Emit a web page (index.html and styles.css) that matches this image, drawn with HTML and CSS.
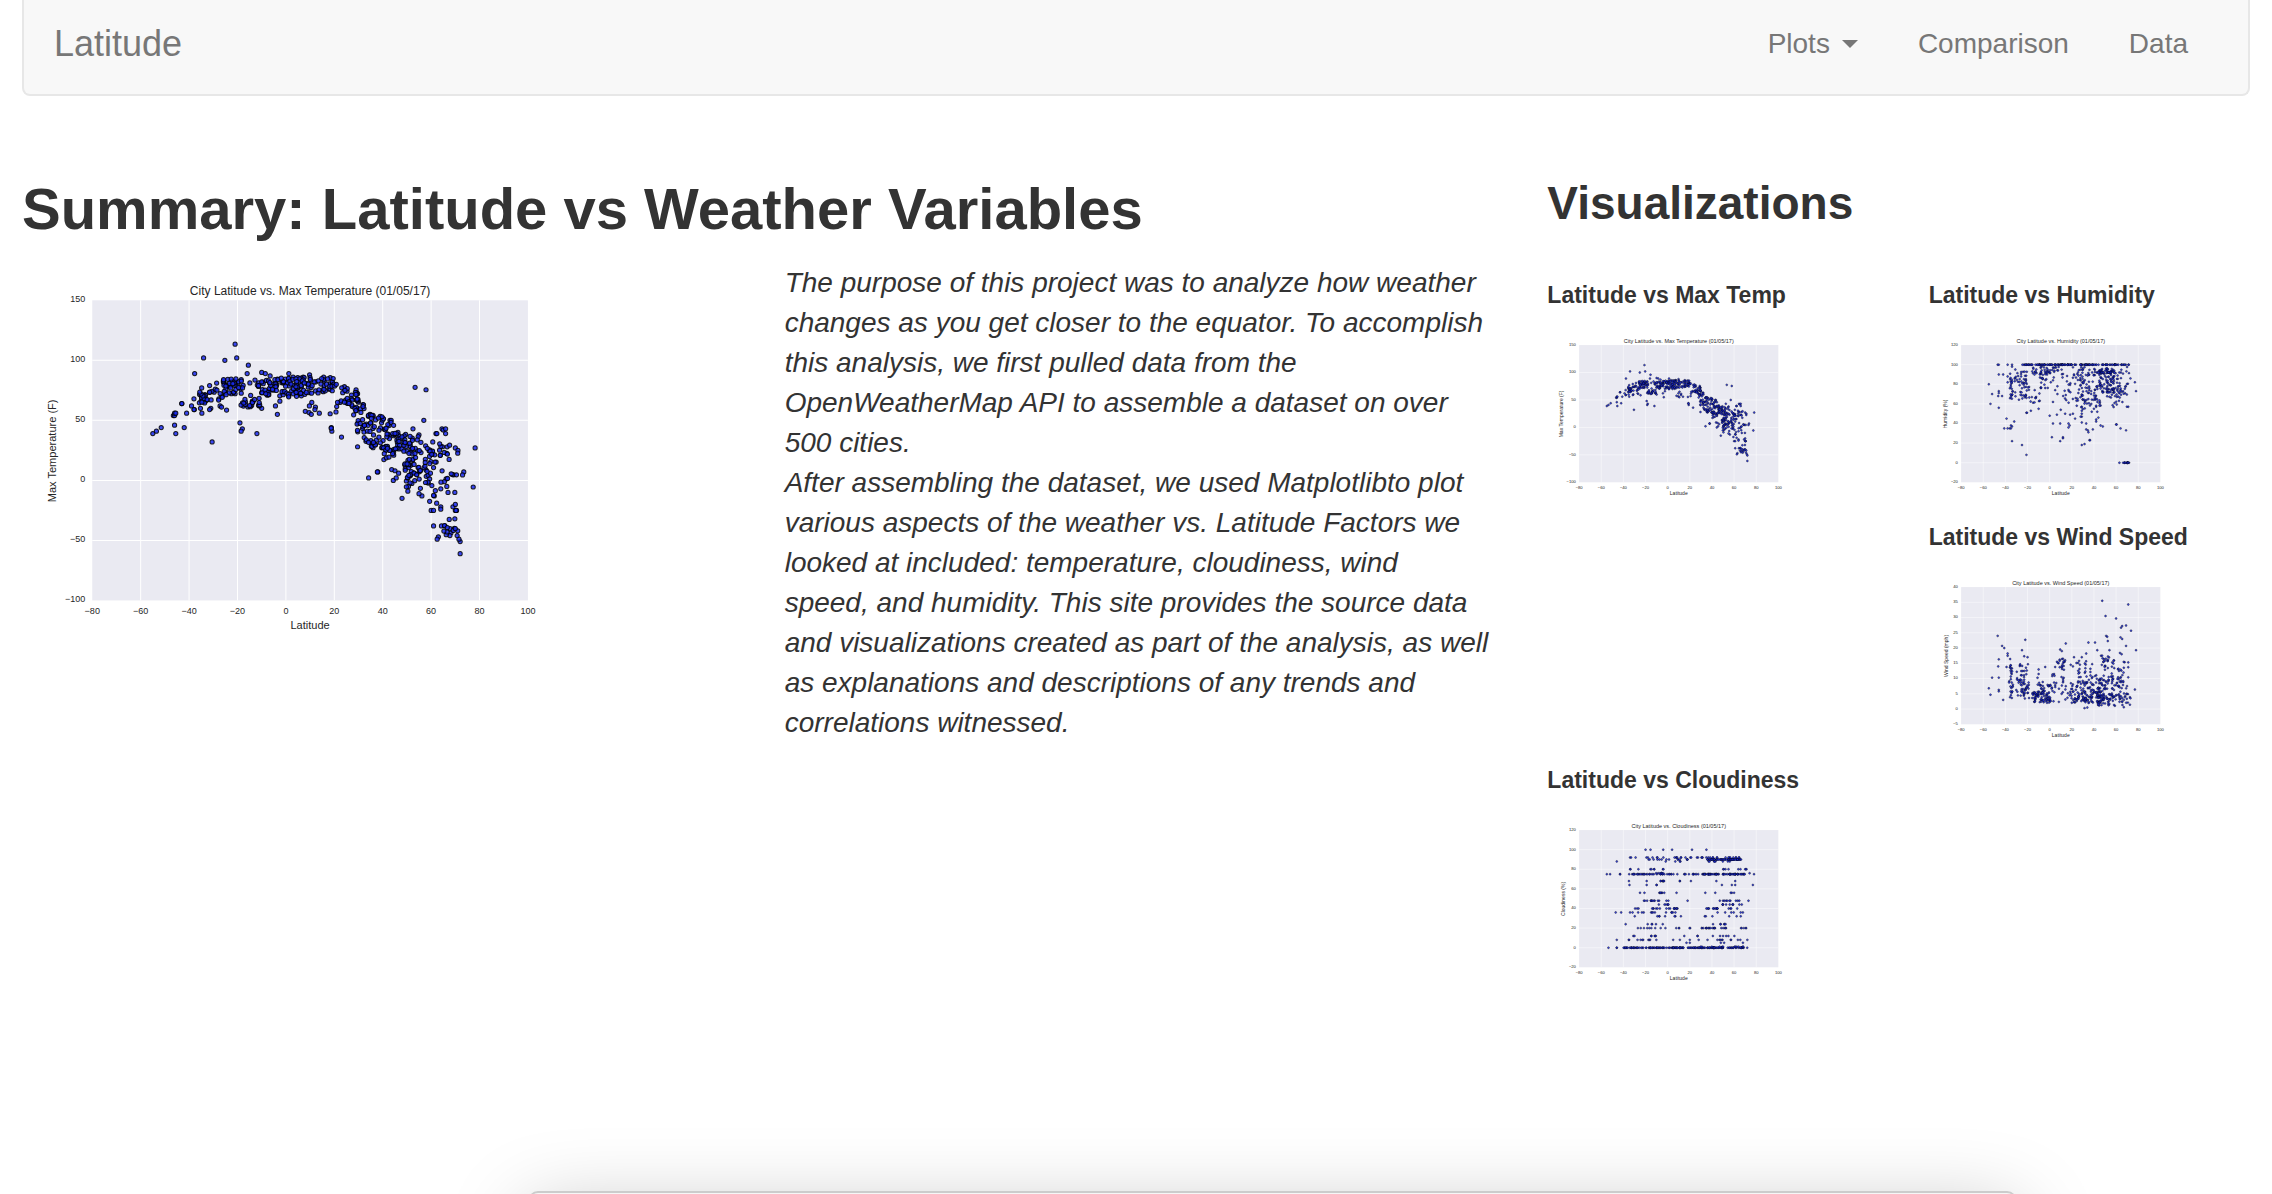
FILE: index.html
```html
<!DOCTYPE html>
<html lang="en">
<head>
<meta charset="utf-8">
<meta name="viewport" content="width=device-width, initial-scale=1">
<title>Latitude</title>
<link rel="stylesheet" href="styles.css">
</head>
<body>
<nav class="navbar">
  <a class="brand" href="#">Latitude</a>
  <ul class="nav-list">
    <li><button class="nav-item" type="button" aria-haspopup="true">Plots <span class="caret"></span></button></li>
    <li><a class="nav-item" href="#comparison">Comparison</a></li>
    <li><a class="nav-item" href="#data">Data</a></li>
  </ul>
</nav>
<main class="page">
  <section class="summary">
    <h1 class="summary-title">Summary: Latitude vs Weather Variables</h1>
    <div class="summary-body">
      <div><svg class="chart" data-chart="temp"></svg></div>
      <p class="summary-text">The purpose of this project was to analyze how weather changes as you get closer to the equator. To accomplish this analysis, we first pulled data from the OpenWeatherMap API to assemble a dataset on over 500 cities.<br>After assembling the dataset, we used Matplotlibto plot various aspects of the weather vs. Latitude Factors we looked at included: temperature, cloudiness, wind speed, and humidity. This site provides the source data and visualizations created as part of the analysis, as well as explanations and descriptions of any trends and correlations witnessed.</p>
    </div>
  </section>
  <section class="visuals">
    <h2 class="visuals-title">Visualizations</h2>
    <div class="thumbs">
      <article class="thumb"><h3 class="thumb-title">Latitude vs Max Temp</h3><a href="#temp"><svg class="chart" data-chart="temp"></svg></a></article>
      <article class="thumb"><h3 class="thumb-title">Latitude vs Humidity</h3><a href="#humidity"><svg class="chart" data-chart="humidity"></svg></a></article>
      <article class="thumb thumb-right"><h3 class="thumb-title">Latitude vs Wind Speed</h3><a href="#wind"><svg class="chart" data-chart="wind"></svg></a></article>
      <article class="thumb"><h3 class="thumb-title">Latitude vs Cloudiness</h3><a href="#clouds"><svg class="chart" data-chart="clouds"></svg></a></article>
    </div>
  </section>
</main>
<div class="sheet"></div>
<script src="charts.js"></script>
</body>
</html>
```
FILE: styles.css
```css
* { box-sizing: border-box; }

body {
  margin: 0;
  padding: 0 22px;
  min-height: 100vh;
  background: #fff;
  color: #333;
  font: 28px/40px "Liberation Sans", Arial, sans-serif;
}

h1, h2, h3, p, ul { margin: 0; padding: 0; }

.navbar {
  display: flex;
  justify-content: space-between;
  padding: 24px 30px 30px;
  background: #f8f8f8;
  border: solid #e7e7e7;
  border-width: 0 2px 2px;
  border-radius: 0 0 8px 8px;
}
.brand { color: #777; font-size: 36px; text-decoration: none; }
.nav-list { display: flex; list-style: none; }
.nav-item {
  display: flex;
  align-items: center;
  gap: 12px;
  padding: 0 30px;
  border: 0;
  background: none;
  color: #777;
  font: inherit;
  text-decoration: none;
}
.caret {
  border: 8px solid transparent;
  border-top-color: #777;
  border-bottom: 0;
}

.page {
  display: grid;
  grid-template-columns: repeat(3, minmax(0, 1fr));
  gap: 60px;
  padding-top: 81px;
}
.summary { grid-column: span 2; }
.summary-title { font-size: 58px; line-height: 64px; margin-bottom: 22px; }
.summary-body { display: grid; grid-template-columns: 1fr 1fr; gap: 60px; }
.summary-text { font-style: italic; margin-right: -2px; }

.visuals-title { font-size: 46px; line-height: 52px; margin-bottom: 53px; }
.thumbs { display: grid; grid-template-columns: 1fr 1fr; gap: 25px 60px; }
.thumb-right { grid-column: 2; }
.thumb-title { font-size: 23px; line-height: 26px; margin-bottom: 20px; white-space: nowrap; }

.chart { display: block; width: 80%; aspect-ratio: 3 / 2; }
.plot-area { fill: #eaeaf2; }
.grid-line { stroke: #fff; stroke-width: 1; }
.dot { fill: #1a2af0; fill-opacity: .85; stroke: #000; stroke-width: 1; stroke-opacity: .85; }
.chart text { fill: #262626; }
.tick { font-size: 9px; }
.axis-name { font-size: 11px; }
.chart-title { font-size: 12px; }
.middle { text-anchor: middle; }
.end { text-anchor: end; }

/* Panel that peeks in from the bottom edge of the window */
.sheet {
  position: fixed;
  left: 23%;
  right: 11%;
  top: calc(100% - 3px);
  height: 400px;
  margin: 0 5px;
  background: #f6f6f6;
  border: 2px solid #ccc;
  border-radius: 10px;
  box-shadow: 0 20px 80px rgba(0, 0, 0, .25);
}
```
FILE: charts.js
```javascript
const LEFT = 70, RIGHT = 504, TOP = 37, BOTTOM = 336;

// bands: [count, latFrom, latTo, valueAtFrom, valueAtTo, spread]
// rows: [value, count, latFrom, latTo]
const charts = {
  temp: {
    title: "City Latitude vs. Max Temperature (01/05/17)", name: "Max Temperature (F)",
    min: -100, max: 150, step: 50, nameX: 34,
    points: [[-55,39],[-53.5,41],[-51.5,44],[-46,46],[-45.5,39],[-42,44],[-46.5,54],[-46,54],[-46,56],[-45.5,56],[-43,64],[-43,64],[-41,56],[-39,62],[-38,68],[-37.7,89],[-37.8,59],[-38,59],[-35.3,60],[-34.7,56],[-34,102],[-34.8,77],[-31.5,79],[-31,60],[-31.5,59],[-30.5,32],[-28.6,81],[-25.2,100],[-20.3,102],[-21,113.5],[-15.5,96],[-16,89],[-19,48],[-18,43],[-18.5,41],[-12,39],[-3.5,55],[-4.3,62],[-2.5,66],[-10,60],[-11,62],[-24.5,58.5],[-27.2,62],[-26.6,61],[-10,90],[-8.5,89],[-6.5,87],[1.2,89],[3,86],[53.4,77.5],[57.9,75.5],[57,50],[78.2,27],[77.4,-5.5],[73.5,7],[73,4.5],[72,-61],[72,-51],[71.5,-49],[71,-42],[63,-47],[62.5,-49],[34.2,2],[48,-15],[29.6,28],[23,36],[19,41],[18.8,44],[18.7,43.5],[8,57.5],[9.6,56.5],[10.5,55],[10.7,65],[9.7,62],[12.2,61],[12,59],[13.8,56],[18.3,55.5],[20.7,57],[21,61.5],[29,75.5],[9.8,88],[7.2,86],[15.6,86],[24.2,78],[38,7],[37.8,7],[43.7,9],[45.1,8],[46.6,6],[44.4,0],[45.6,2],[50.4,-9],[60,-25],[61,-25],[61,-38],[64.3,-38],[65.7,-38],[67.5,-32.5],[69.8,-32],[70.5,-25],[70,-25],[70.3,-25],[69,-22],[70,-20],[64,-22],[64,-24],[62.3,-19],[59.4,-17.5],[61.3,-13],[61,-12.5],[64,-7],[66.5,-5],[67,-10],[69.8,-10],[62,39],[62.4,39],[64.5,43],[65,42],[66,43],[66,39],[55,38],[52.5,43],[43,50],[43.5,50],[60.7,32],[70,27],[71.1,25],[56.2,-13],[55,-11]],
    bands: [[19,-36,-32,69,69,5],[12,-32,-26,70,72,6],[38,-26,-18,78,79,7],[22,-19,-10,66,68,6],[10,-19,-11,81,82,5],[85,-10,8,77,78,8],[46,6,20,79,79,7],[36,20,30,74,66,8],[44,28,36,57,42,15],[44,34,45,46,34,14],[14,40,45,22,24,6],[46,45,56,33,28,8],[46,49,62,5,0,11],[30,57,71,23,20,10],[9,63,71,4,5,6],[12,65,71,-42,-43,6],[8,50,57,14,18,4]]
  },
  humidity: {
    title: "City Latitude vs. Humidity (01/05/17)", name: "Humidity (%)",
    min: -20, max: 120, step: 20, nameX: 40,
    points: [[-55,80],[-53.5,60],[-52,70],[-46,90],[-42,90],[-47,100],[-46,100],[-46,73],[-46,71],[-46.5,68],[-43,68],[-46,56],[-38,100],[-38,88],[-38,82],[-36,76],[-34,100],[-34,98],[-31,95],[-39,45],[-41,35],[-38,35],[-36,35],[-35,35],[-34,37],[-35,38],[-32,42],[-34,22],[-25,18],[-21,8],[-21,51],[-20.5,51],[-17,53],[-10,55],[0,48],[3,40],[2,26],[6.5,49],[9.5,40],[10,54],[9.5,22],[12,25],[12,26],[14,50],[17,40],[17,36],[18,38],[18.5,49],[21,50],[23,45],[29,18],[31.5,19],[36,23],[36.5,23],[35,31],[34.5,33],[33,34],[39,34],[33,40],[29,41],[42,42],[42,44],[44,46],[46,38],[48,37],[60,39],[60.5,39],[64,35],[69,33],[29,47],[28,47],[29,50],[29,53],[29,57],[38,52],[40,55],[42,57],[43,52],[78,73],[77,82],[73,86],[71,57],[1,82],[3,84],[5,74],[7,70],[7,78],[3,62],[63,0]],
    bands: [[20,-36,-33,78,78,14],[16,-32,-26,77,77,17],[36,-26,-18,80,80,15],[12,-19,-8,68,70,8],[34,-16,1,94,95,5],[15,-9,-1,82,84,8],[14,2,12,91,90,8],[52,12,32,78,78,20],[36,27,36,73,73,20],[50,35,46,78,78,20],[60,45,58,84,84,13],[46,50,70,75,75,9],[28,55,72,84,86,12],[8,56,70,61,61,5]],
    rows: [[100,58,-25,15],[100,50,10,48],[100,32,46,73],[92,22,42,66],[0,15,66,72]]
  },
  wind: {
    title: "City Latitude vs. Wind Speed (01/05/17)", name: "Wind Speed (mph)",
    min: -5, max: 40, step: 5, nameX: 42,
    points: [[-47,24],[-43,20.7],[-41,20],[-22,22.7],[-25,19.3],[-46,16.3],[-46.5,14],[-46,10.3],[-52,10.3],[-46,6.3],[-46,5.8],[-55,6.8],[-53.5,4.7],[-42,3],[-38,18.2],[-38,17.5],[-23,17.3],[-20,17],[-39,13.8],[14.5,21.5],[35,21.8],[41,21.8],[47.5,35.5],[50.5,30.5],[60,29.7],[71,34.3],[64.5,26.7],[65.5,27.2],[69,27.4],[73.5,25.7],[51,24],[52,23.7],[52.5,22.3],[64,23.5],[65.5,23],[69,20.7],[78,19.3],[77,6.4],[54,19.3],[43,19.3],[33,18.2],[9.5,19.5],[11,19],[65,18],[63.5,18.4],[22,17],[29,17],[31.5,.3],[34,.5],[67,.6],[71,13.7],[71,15.3],[71,10.4],[9,16.2],[12,16.5],[14,16],[5,13.8],[8,15],[19,14.5],[21,14],[-4,13.8],[-10,13],[-10,11.5]],
    bands: [[24,-36,-33,10,10,7],[14,-38,-20,8,8,2],[26,-30,-18,9,9,6],[8,-27,-16,13,13,2],[16,-26,-19,7,7,2],[64,-16,1,4,4,2],[22,-16,1,5,5,3],[14,-11,8,9,10,2],[10,5,14,15,15,2],[11,10,13,11,12,4],[14,1,15,5,5,3],[86,16,46,4,4,2],[56,17,46,6,6,3],[34,24,46,12,12,4],[72,43,73,3,3,2],[62,43,71,7,7,4],[44,46,70,12,12,4],[8,46,54,17,17,1]]
  },
  clouds: {
    title: "City Latitude vs. Cloudiness (01/05/17)", name: "Cloudiness (%)",
    min: -20, max: 120, step: 20, nameX: 39,
    points: [[-20,100],[-15.5,100],[-4,100],[4,100],[22,100],[35,100],[-46,88],[-55,75],[-52,75],[-43,75],[-43,75],[78,75],[74,76],[77,64],[73,48],[-47,36],[-42,36],[-34,36],[-38,24],[-46,8],[-53.5,0],[-46,0],[-46,0],[-34,92],[-33,92],[-29,92],[-35,68],[-34.5,64],[-19,68],[-19,64],[-10,64],[-10,64],[11,68],[11,68],[21,68],[44,68],[61,68],[49,64],[58,64],[61,64],[-25,56],[-21,56],[8,56],[34,56],[43,56],[57,56],[58,56],[60,56],[18,48],[-35,8],[-35,8],[72,8],[-31,12],[-30,12],[15,12],[27,12],[27,12],[5,8],[11,8],[20,8],[20,5],[17,5],[28,8],[36,8],[48,5],[51,5],[68,5]],
    rows: [[0,58,-42,5],[0,115,3,72],[75,52,-36,40],[75,60,32,71],[90,14,-25,22],[92,20,-25,32],[90,54,36,60],[90,24,55,67],[92,16,30,66],[88,8,36,58],[88,4,-5,12],[80,9,-36,5],[80,9,48,72],[68,7,-10,-3],[56,6,-10,-2],[48,13,-29,1],[48,10,46,68],[44,6,-9,1],[44,10,46,70],[40,19,-30,9],[40,12,34,46],[40,4,55,68],[36,13,-32,7],[36,6,45,68],[32,8,-30,12],[32,6,25,66],[24,5,-26,-2],[24,6,38,62],[20,14,-27,22],[20,15,30,44],[20,10,48,72],[12,5,-15,-10],[12,6,38,63],[8,8,-28,-9],[8,9,41,70],[1,12,28,70],[76,7,-12,-2]]
  }
};

const NS = "http://www.w3.org/2000/svg";
function add(parent, tag, attrs, text) {
  const el = document.createElementNS(NS, tag);
  for (const key in attrs) el.setAttribute(key, attrs[key]);
  if (text !== undefined) el.textContent = text;
  parent.appendChild(el);
}

// Seeded generator, so that every load draws the same dots
function generator(seed) {
  return () => {
    seed = (seed + 0x6d2b79f5) | 0;
    let t = Math.imul(seed ^ (seed >>> 15), 1 | seed);
    t = (t + Math.imul(t ^ (t >>> 7), 61 | t)) ^ t;
    return ((t ^ (t >>> 14)) >>> 0) / 4294967296;
  };
}

function draw(svg, c) {
  const x = lat => LEFT + (lat + 80) / 180 * (RIGHT - LEFT);
  const y = v => BOTTOM - (v - c.min) / (c.max - c.min) * (BOTTOM - TOP);
  const label = v => String(v).replace("-", "\u2212");
  const rand = generator(17);
  svg.setAttribute("viewBox", "0 0 560 373");
  svg.setAttribute("role", "img");
  svg.setAttribute("aria-label", c.title);
  add(svg, "rect", { class: "plot-area", x: LEFT, y: TOP, width: RIGHT - LEFT, height: BOTTOM - TOP });
  for (let lat = -80; lat <= 100; lat += 20) {
    if (lat > -80 && lat < 100) add(svg, "line", { class: "grid-line", x1: x(lat), x2: x(lat), y1: TOP, y2: BOTTOM });
    add(svg, "text", { class: "tick middle", x: x(lat), y: 350 }, label(lat));
  }
  for (let v = c.min; v <= c.max; v += c.step) {
    if (v > c.min && v < c.max) add(svg, "line", { class: "grid-line", x1: LEFT, x2: RIGHT, y1: y(v), y2: y(v) });
    add(svg, "text", { class: "tick end", x: 63, y: y(v) + 2 }, label(v));
  }
  const dots = c.points.slice();
  for (const [n, a, b, from, to, spread] of c.bands || []) {
    for (let i = 0; i < n; i++) {
      const t = rand();
      const v = from + t * (to - from) + (rand() * 2 - 1) * spread;
      dots.push([a + t * (b - a), c.max === 120 && v > 100 ? 200 - v : v]);
    }
  }
  for (const [v, n, a, b] of c.rows || []) {
    for (let i = 0; i < n; i++) dots.push([a + rand() * (b - a), v]);
  }
  for (const [lat, v] of dots) add(svg, "circle", { class: "dot", cx: x(lat).toFixed(1), cy: y(v).toFixed(1), r: 2.1 });
  add(svg, "text", { class: "chart-title middle", x: 287, y: 32 }, c.title);
  add(svg, "text", { class: "axis-name middle", x: 287, y: 364 }, "Latitude");
  add(svg, "text", { class: "axis-name middle", transform: `translate(${c.nameX} 187) rotate(-90)` }, c.name);
}

document.querySelectorAll("[data-chart]").forEach(svg => draw(svg, charts[svg.dataset.chart]));
```
